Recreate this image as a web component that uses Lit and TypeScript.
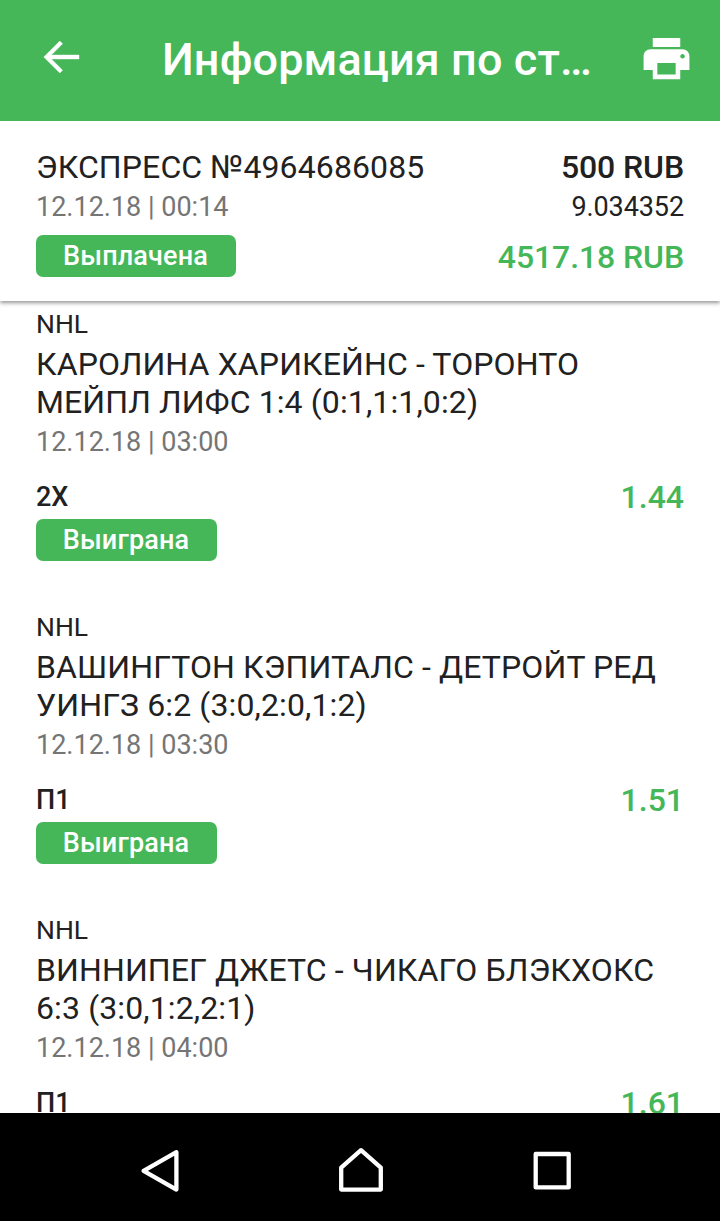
import { LitElement, html, css, nothing } from "lit";
import { customElement, property } from "lit/decorators.js";

interface Bet {
  teams: string[];
  date: string;
  pick: string;
  odds: string;
  status?: string;
}

const bets: Bet[] = [
  { teams: ["КАРОЛИНА ХАРИКЕЙНС - ТОРОНТО", "МЕЙПЛ ЛИФС 1:4 (0:1,1:1,0:2)"], date: "12.12.18 | 03:00", pick: "2X", odds: "1.44", status: "Выиграна" },
  { teams: ["ВАШИНГТОН КЭПИТАЛС - ДЕТРОЙТ РЕД", "УИНГЗ 6:2 (3:0,2:0,1:2)"], date: "12.12.18 | 03:30", pick: "П1", odds: "1.51", status: "Выиграна" },
  { teams: ["ВИННИПЕГ ДЖЕТС - ЧИКАГО БЛЭКХОКС", "6:3 (3:0,1:2,2:1)"], date: "12.12.18 | 04:00", pick: "П1", odds: "1.61" },
];

@customElement("bet-item")
class BetItem extends LitElement {
  @property({ attribute: false }) bet!: Bet;

  static styles = css`
    :host { display: block; height: 303px; box-sizing: border-box; padding: 6px 36px 0; flex: none; white-space: nowrap; }
    .league { font-size: 26.5px; line-height: 34px; }
    .teams { font-size: 32px; line-height: 38px; padding-top: 4px; letter-spacing: 0.12px; }
    .date { font-size: 27px; line-height: 34px; padding-top: 4px; color: #757575; }
    .row { display: flex; justify-content: space-between; align-items: center; height: 38px; margin-top: 19px; }
    .pick { font-size: 27px; font-weight: 500; }
    .odds { font-size: 32px; font-weight: 500; color: #45b759; }
    .badge { width: 181px; height: 42px; box-sizing: border-box; padding-right: 1px; margin-top: 3px; border-radius: 7px; background: #45b759; color: #fff; font-size: 27px; font-weight: 500; line-height: 42px; letter-spacing: 0.15px; text-align: center; }
  `;

  render() {
    return html`
      <div class="league">NHL</div>
      <div class="teams">${this.bet.teams.map((t) => html`<div>${t}</div>`)}</div>
      <div class="date">${this.bet.date}</div>
      <div class="row"><span class="pick">${this.bet.pick}</span><span class="odds">${this.bet.odds}</span></div>
      ${this.bet.status ? html`<div class="badge">${this.bet.status}</div>` : nothing}
    `;
  }
}

@customElement("app-root")
class AppRoot extends LitElement {
  static styles = css`
    :host { display: flex; flex-direction: column; width: 720px; height: 1221px; overflow: hidden; background: #fff; color: #212121; font-family: Roboto, sans-serif; }
    .bar { display: flex; align-items: center; height: 121px; flex: none; background: #45b759; color: #fff; box-sizing: border-box; padding: 0 26.5px 0 37px; z-index: 2; }
    .back { width: 48px; height: 48px; margin-bottom: 8px; }
    .title { margin: 0 0 2px 77px; flex: 1; font-size: 45px; font-weight: 500; line-height: 60px; letter-spacing: 0.1px; white-space: nowrap; }
    .print { width: 55px; height: 55px; margin-bottom: 5px; }
    .summary { display: flex; justify-content: space-between; height: 180px; flex: none; box-sizing: border-box; padding: 27px 36px 0; white-space: nowrap; box-shadow: 0 2px 4px rgba(0,0,0,.42); z-index: 1; background: #fff; }
    .right { text-align: right; letter-spacing: -0.1px; }
    .name, .stake { font-size: 32px; line-height: 38px; }
    .name { letter-spacing: 0.12px; }
    .stake { font-weight: 500; }
    .date, .coef { font-size: 27px; line-height: 42px; }
    .date { color: #757575; }
    .badge { width: 200px; height: 42px; box-sizing: border-box; padding-right: 1px; margin-top: 7px; border-radius: 7px; background: #45b759; color: #fff; font-size: 27px; font-weight: 500; line-height: 42px; letter-spacing: 0.15px; text-align: center; }
    .payout { font-size: 32px; line-height: 38px; margin-top: 10px; font-weight: 500; color: #45b759; }
    .list { flex: 1; min-height: 0; overflow: hidden; display: flex; flex-direction: column; }
    .nav { height: 108px; flex: none; background: #000; }
    svg { display: block; }
  `;

  render() {
    return html`
      <header class="bar">
        <svg class="back" viewBox="0 0 24 24" fill="#fff"><path d="M21 11H7.2l5.6-5.6L11.4 4l-8 8 8 8 1.4-1.4L7.2 13H21z" stroke="#fff" stroke-width=".2"/></svg>
        <div class="title">Информация по ст…</div>
        <svg class="print" viewBox="0 0 24 24" fill="#fff"><path d="M19 8H5c-1.66 0-3 1.34-3 3v6h4v4h12v-4h4v-6c0-1.66-1.34-3-3-3zm-3 11H8v-5h8v5zm3-7c-.55 0-1-.45-1-1s.45-1 1-1 1 .45 1 1-.45 1-1 1zm-1-9H6v4h12V3z"/></svg>
      </header>
      <section class="summary">
        <div>
          <div class="name">ЭКСПРЕСС №4964686085</div>
          <div class="date">12.12.18 | 00:14</div>
          <div class="badge">Выплачена</div>
        </div>
        <div class="right">
          <div class="stake">500 RUB</div>
          <div class="coef">9.034352</div>
          <div class="payout">4517.18 RUB</div>
        </div>
      </section>
      <main class="list">${bets.map((b) => html`<bet-item .bet=${b}></bet-item>`)}</main>
      <nav class="nav">
        <svg width="720" height="108" viewBox="0 0 720 108" fill="none" stroke="#fff" stroke-width="4.3" stroke-linejoin="round">
          <path d="M176.4 39.2V76.6L143.6 57.9z"/>
          <path d="M341.2 76.6V54.6L361 37.2L380.8 54.6V76.6z"/>
          <path d="M535.7 41h33v33.4h-33z"/>
        </svg>
      </nav>
    `;
  }
}
